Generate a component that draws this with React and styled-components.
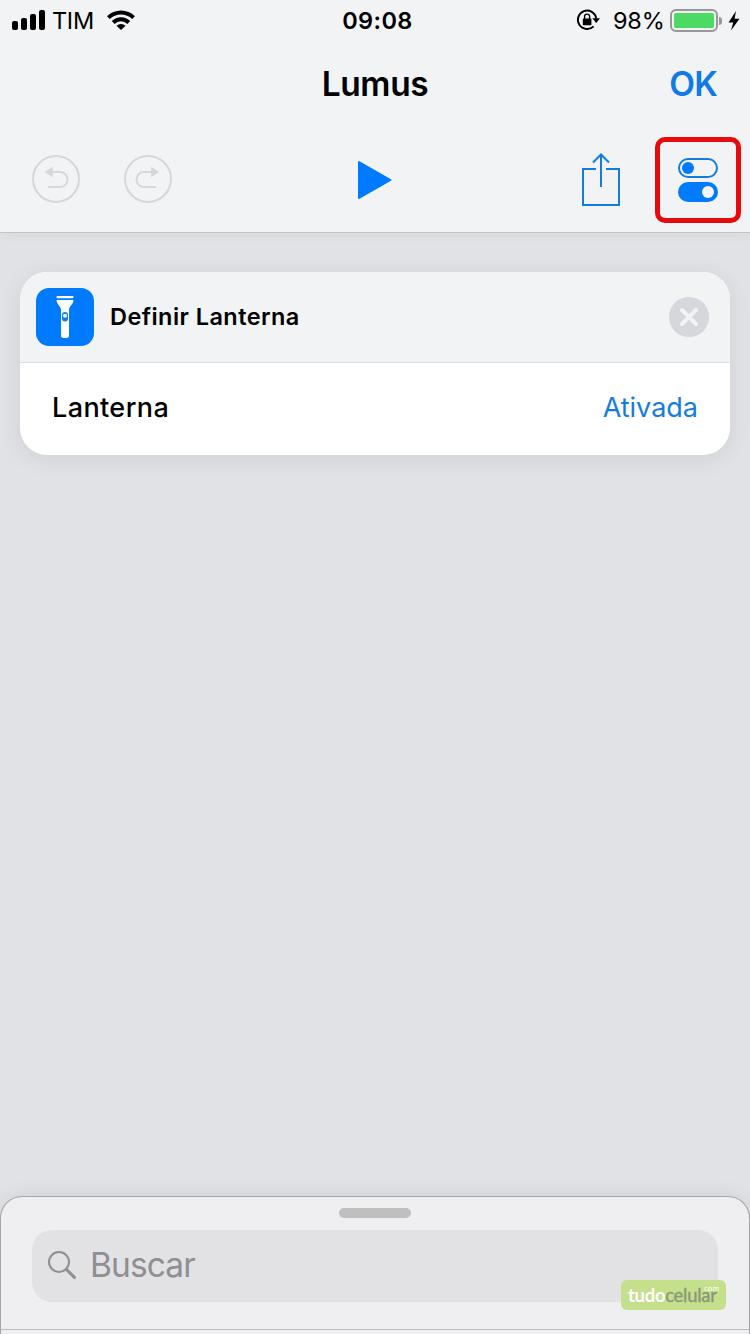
import React from 'react';
import styled, { createGlobalStyle } from 'styled-components';

const colors = {
  blue: '#007aff',
  link: '#147ce0',
  bar: '#f1f3f5',
  page: '#e1e2e6',
  disabled: '#d6d7da',
};

const App = () => {
  return (
    <>
      <GlobalStyle />
      <Screen>
        <Header>
          <StatusBar />
          <TitleBar>
            <Title>Lumus</Title>
            <DoneButton>OK</DoneButton>
          </TitleBar>
          <Toolbar />
        </Header>
        <Workflow>
          <ActionCard title="Definir Lanterna" label="Lanterna" value="Ativada" />
        </Workflow>
        <SearchDrawer />
      </Screen>
    </>
  );
};

const StatusBar = () => (
  <StatusRow>
    <StatusLeft>
      <SignalIcon />
      <Carrier>TIM</Carrier>
      <WifiIcon />
    </StatusLeft>
    <Clock>09:08</Clock>
    <StatusRight>
      <RotationLockIcon />
      <Percent>98%</Percent>
      <Battery>
        <BatteryLevel />
      </Battery>
      <BatteryTip />
      <BoltIcon />
    </StatusRight>
  </StatusRow>
);

const Toolbar = () => (
  <ToolbarRow>
    <ToolGroup>
      <RoundButton aria-label="Desfazer">
        <UndoIcon />
      </RoundButton>
      <RoundButton aria-label="Refazer">
        <UndoIcon flipped />
      </RoundButton>
    </ToolGroup>
    <PlainButton aria-label="Executar">
      <PlayIcon />
    </PlainButton>
    <ToolGroup $end>
      <PlainButton aria-label="Compartilhar">
        <ShareIcon />
      </PlainButton>
      <Highlight>
        <TogglesIcon />
      </Highlight>
    </ToolGroup>
  </ToolbarRow>
);

const ActionCard = ({ title, label, value }) => (
  <Card>
    <CardHeader>
      <AppIcon>
        <FlashlightIcon />
      </AppIcon>
      <CardTitle>{title}</CardTitle>
      <RemoveButton aria-label="Remover">
        <CrossIcon />
      </RemoveButton>
    </CardHeader>
    <CardRow>
      <Label>{label}</Label>
      <Value>{value}</Value>
    </CardRow>
  </Card>
);

const SearchDrawer = () => (
  <Drawer>
    <Handle />
    <SearchField>
      <SearchIcon />
      <Placeholder>Buscar</Placeholder>
    </SearchField>
    <DrawerLine />
    <Watermark>
      <b>tudo</b>
      <span>celular</span>
      <small>com</small>
    </Watermark>
  </Drawer>
);

const SignalIcon = () => (
  <svg width="34" height="22" viewBox="0 0 34 22">
    <rect x="0" y="11" width="6" height="9" rx="2" />
    <rect x="9" y="8" width="6" height="12" rx="2" />
    <rect x="18" y="4" width="6" height="16" rx="2" />
    <rect x="27" y="0" width="6" height="20" rx="2" />
  </svg>
);

const WifiIcon = () => (
  <svg width="28" height="22" viewBox="0 0 28 22">
    <path d="M0 6.3 A19.8 19.8 0 0 1 28 6.3 L25.2 9.1 A15.8 15.8 0 0 0 2.8 9.1 Z" />
    <path d="M4.8 11.1 A13 13 0 0 1 23.2 11.1 L20.4 13.9 A9 9 0 0 0 7.6 13.9 Z" />
    <path d="M9.5 15.8 A6.4 6.4 0 0 1 18.5 15.8 L14 20 Z" />
  </svg>
);

const RotationLockIcon = () => (
  <svg width="24" height="24" viewBox="0 0 24 24">
    <path
      d="M16.6 17.3 A9.2 9.2 0 1 1 19.2 9.5"
      fill="none"
      stroke="#000"
      strokeWidth="1.9"
    />
    <path d="M15.4 9.3 H23 L19.2 14 Z" />
    <rect x="5.8" y="9.6" width="8.6" height="6.6" rx="0.8" />
    <path
      d="M7.6 10 V7.6 A2.5 2.5 0 0 1 12.6 7.6 V10"
      fill="none"
      stroke="#000"
      strokeWidth="1.4"
    />
  </svg>
);

const BoltIcon = () => (
  <svg width="12" height="20" viewBox="0 0 12 20">
    <path d="M8 0 L0.5 11.4 H5.2 L3 19.6 L11.5 7.8 H6.6 Z" />
  </svg>
);

const UndoIcon = ({ flipped }) => (
  <svg width="48" height="48" viewBox="0 0 48 48">
    <g
      transform={flipped ? 'translate(48 0) scale(-1 1)' : undefined}
      fill="none"
      stroke={colors.disabled}
      strokeWidth="2"
    >
      <circle cx="24" cy="24" r="23" />
      <path d="M19 17 H28 A7.5 7.5 0 0 1 28 32 H16" />
      <path d="M12.8 17 L20.8 11.8 V22.2 Z" fill={colors.disabled} stroke="none" />
    </g>
  </svg>
);

const PlayIcon = () => (
  <svg width="36" height="40" viewBox="0 0 36 40">
    <path
      d="M2 2 L33.5 20 L2 38 Z"
      fill={colors.blue}
      stroke={colors.blue}
      strokeWidth="2"
      strokeLinejoin="round"
    />
  </svg>
);

const ShareIcon = () => (
  <svg width="40" height="54" viewBox="0 0 40 54" fill="none" stroke={colors.link} strokeWidth="2">
    <path d="M15 16 H2 V52 H38 V16 H25" />
    <path d="M20 34 V1.5" />
    <path d="M12 9.5 L20 1.5 L28 9.5" />
  </svg>
);

const TogglesIcon = () => (
  <svg width="40" height="44" viewBox="0 0 40 44">
    <rect x="1" y="1" width="38" height="18" rx="9" fill="none" stroke={colors.link} strokeWidth="2" />
    <circle cx="10" cy="10" r="6" fill={colors.blue} />
    <rect x="0" y="24" width="40" height="20" rx="10" fill={colors.blue} />
    <circle cx="30" cy="34" r="6" fill="#f4f6f9" />
  </svg>
);

const FlashlightIcon = () => (
  <svg width="18" height="42" viewBox="0 0 18 42" fill="#fff">
    <rect x="0.5" y="0" width="17" height="2.2" rx="0.8" />
    <path d="M0.5 4 H17.5 C17.5 8.5 13 10 13 14 V40 Q13 42 9 42 Q5 42 5 40 V14 C5 10 0.5 8.5 0.5 4 Z" />
    <rect x="6" y="16" width="6" height="9.6" rx="3" fill={colors.link} />
    <circle cx="9" cy="19.8" r="2" />
  </svg>
);

const CrossIcon = () => (
  <svg width="18" height="18" viewBox="0 0 18 18">
    <path d="M2 2 L16 16 M16 2 L2 16" stroke={colors.bar} strokeWidth="4" strokeLinecap="round" />
  </svg>
);

const SearchIcon = () => (
  <svg width="28" height="28" viewBox="0 0 28 28" fill="none" stroke="#8e8e93" strokeLinecap="round">
    <circle cx="11" cy="10" r="10" strokeWidth="2" />
    <path d="M18.6 17.6 L26.4 25.4" strokeWidth="3" />
  </svg>
);

const GlobalStyle = createGlobalStyle`
  * {
    box-sizing: border-box;
  }

  body {
    margin: 0;
    font-family: Inter, 'Liberation Sans', sans-serif;
  }

  svg {
    display: block;
    flex-shrink: 0;
    overflow: visible;
  }

  button {
    padding: 0;
    border: 0;
    background: none;
    font-family: inherit;
  }
`;

const Screen = styled.div`
  display: flex;
  flex-direction: column;
  width: 750px;
  height: 1334px;
  overflow: hidden;
  background: ${colors.page};
  color: #000;
`;

const Header = styled.header`
  height: 233px;
  background: ${colors.bar};
  border-bottom: 1px solid #c3c4c9;
  box-shadow: 0 1px 12px rgba(0, 0, 0, 0.05);
`;

const StatusRow = styled.div`
  display: grid;
  grid-template-columns: 1fr auto 1fr;
  height: 41px;
  padding: 0 10px 0 12px;
  font-size: 23.5px;
  white-space: nowrap;
`;

const StatusLeft = styled.div`
  display: flex;
  align-items: center;
`;

const Carrier = styled.span`
  width: 61px;
  padding-left: 6px;
  letter-spacing: -0.3px;
`;

const Clock = styled.time`
  display: flex;
  align-items: center;
  padding-left: 3px;
  font-weight: 600;
  letter-spacing: 0.4px;
`;

const StatusRight = styled.div`
  display: flex;
  align-items: center;
  justify-content: flex-end;
`;

const Percent = styled.span`
  width: 69px;
  padding-left: 12px;
  letter-spacing: -0.2px;
`;

const Battery = styled.div`
  width: 48px;
  height: 23px;
  padding: 2px;
  border: 2px solid #97979a;
  border-radius: 6px;
`;

const BatteryLevel = styled.div`
  width: 40px;
  height: 100%;
  border-radius: 2px;
  background: #4cd964;
`;

const BatteryTip = styled.div`
  width: 3px;
  height: 8px;
  margin: 0 6px 0 1px;
  border-radius: 0 3px 3px 0;
  background: #97979a;
`;

const TitleBar = styled.div`
  display: grid;
  grid-template-columns: 1fr auto 1fr;
  align-items: center;
  height: 87px;
  padding: 0 33px 1px;
`;

const Title = styled.h1`
  grid-column: 2;
  margin: 0;
  font-size: 33.5px;
  font-weight: 600;
  letter-spacing: -0.4px;
`;

const DoneButton = styled.button`
  justify-self: end;
  color: #107ae8;
  font-size: 33.5px;
  font-weight: 600;
  letter-spacing: -0.8px;
`;

const ToolbarRow = styled.div`
  display: grid;
  grid-template-columns: 1fr auto 1fr;
  align-items: center;
  height: 104px;
  padding: 0 9px 0 8px;
`;

const ToolGroup = styled.div`
  display: flex;
  align-items: center;
  justify-content: ${(props) => (props.$end ? 'flex-end' : 'flex-start')};
  gap: ${(props) => (props.$end ? '34px' : '44px')};
  padding-left: ${(props) => (props.$end ? 0 : '24px')};
`;

const PlainButton = styled.button`
  display: flex;
`;

const RoundButton = styled(PlainButton)`
  margin-top: -2px;
`;

const Highlight = styled(PlainButton)`
  align-items: center;
  justify-content: center;
  width: 86px;
  height: 86px;
  border: 5px solid #e60a0c;
  border-radius: 10px;
`;

const Workflow = styled.main`
  flex: 1;
  padding: 39px 20px;
`;

const Card = styled.section`
  overflow: hidden;
  border-radius: 27px;
  background: #fff;
  box-shadow: 0 4px 24px rgba(0, 0, 0, 0.08);
`;

const CardHeader = styled.div`
  display: flex;
  align-items: center;
  height: 91px;
  padding: 0 21px 0 16px;
  background: ${colors.bar};
  border-bottom: 1px solid #dcdde0;
`;

const AppIcon = styled.div`
  display: flex;
  align-items: center;
  justify-content: center;
  width: 58px;
  height: 58px;
  border-radius: 13px;
  background: ${colors.blue};
`;

const CardTitle = styled.h2`
  flex: 1;
  margin: 0 0 0 16px;
  padding-bottom: 2px;
  font-size: 23.5px;
  font-weight: 600;
  letter-spacing: 0.45px;
`;

const RemoveButton = styled.button`
  display: flex;
  align-items: center;
  justify-content: center;
  width: 40px;
  height: 40px;
  border-radius: 50%;
  background: #d5d7dc;
`;

const CardRow = styled.div`
  display: flex;
  align-items: center;
  justify-content: space-between;
  height: 92px;
  padding: 0 32px 3px;
  font-size: 27px;
`;

const Label = styled.span`
  font-weight: 500;
  letter-spacing: 0.4px;
`;

const Value = styled.span`
  color: ${colors.link};
`;

const Drawer = styled.footer`
  position: relative;
  display: flex;
  flex-direction: column;
  align-items: center;
  height: 138px;
  padding-top: 11px;
  border: 1px solid #a4a5a9;
  border-bottom: 0;
  border-radius: 22px 22px 0 0;
  background: #efeff1;
  box-shadow: 0 0 20px rgba(0, 0, 0, 0.08);
`;

const Handle = styled.div`
  width: 72px;
  height: 10px;
  border-radius: 5px;
  background: #bfbfc0;
`;

const SearchField = styled.div`
  display: flex;
  align-items: center;
  width: 686px;
  height: 72px;
  margin-top: 12px;
  padding-left: 16px;
  border-radius: 20px;
  background: #e2e2e4;
`;

const Placeholder = styled.span`
  margin-left: 14px;
  padding-bottom: 3px;
  color: #8e8e93;
  font-size: 33.5px;
  letter-spacing: -0.9px;
`;

const DrawerLine = styled.div`
  width: 100%;
  height: 1px;
  margin-top: 27px;
  background: #bcbcbf;
`;

const Watermark = styled.div`
  position: absolute;
  right: 23px;
  bottom: 24px;
  display: flex;
  align-items: center;
  width: 105px;
  height: 30px;
  padding-left: 7px;
  border-radius: 6px;
  background: #c4e08b;
  font-family: Lato, sans-serif;
  font-size: 18.5px;
  letter-spacing: -0.3px;

  b {
    color: #fff;
    font-weight: 700;
  }

  span {
    color: #8b977a;
    -webkit-text-stroke: 0.4px #8b977a;
  }

  small {
    position: absolute;
    top: 4px;
    right: 7px;
    color: #fff;
    font-size: 8px;
    line-height: 8px;
    letter-spacing: 0;
  }
`;

export default App;
